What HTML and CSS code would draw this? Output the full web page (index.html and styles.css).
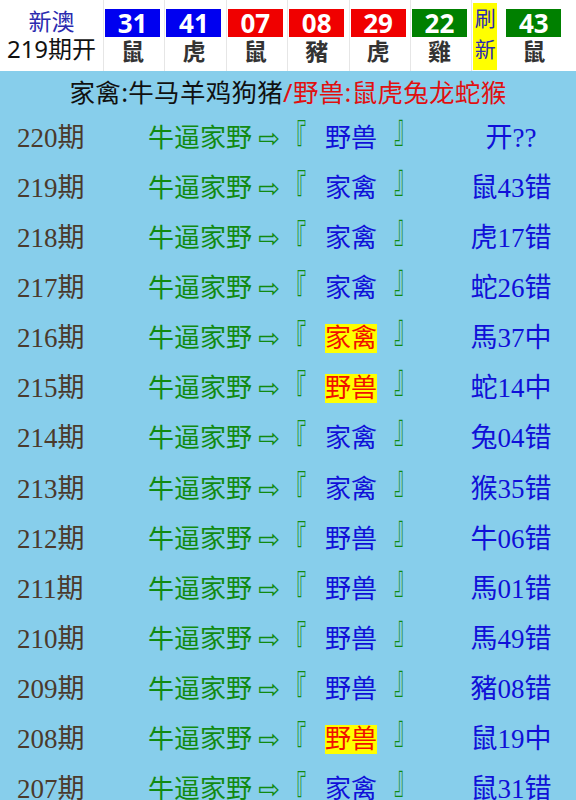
FILE: index.html
```html
<!DOCTYPE html>
<html lang="zh-CN">

<head>
	<meta charset="UTF-8">
	<meta name="viewport" content="width=device-width, initial-scale=1.0">
	<title>新澳 牛逼家野</title>
	<link rel="stylesheet" href="styles.css">
</head>

<body>
	<div class="top">
		<div class="label">
			<div class="area">新澳</div>
			<div class="issue">219期开</div>
		</div>
		<div class="ball"><div class="num blue">31</div><div class="sx">鼠</div></div>
		<div class="ball"><div class="num blue">41</div><div class="sx">虎</div></div>
		<div class="ball"><div class="num red">07</div><div class="sx">鼠</div></div>
		<div class="ball"><div class="num red">08</div><div class="sx">豬</div></div>
		<div class="ball"><div class="num red">29</div><div class="sx">虎</div></div>
		<div class="ball"><div class="num green">22</div><div class="sx">雞</div></div>
		<div class="refresh">刷<br>新</div>
		<div class="ball last"><div class="num green">43</div><div class="sx">鼠</div></div>
	</div>

	<div class="list">
		<div class="sub">家禽:牛马羊鸡狗猪<span class="wild">/野兽:鼠虎兔龙蛇猴</span></div>

		<div class="row"><span class="qi">220期</span><span class="tip">牛逼家野<i class="arr">⇨</i><i class="bk l">『</i><b>野兽</b><i class="bk r">』</i></span><span class="res">开??</span></div>
		<div class="row"><span class="qi">219期</span><span class="tip">牛逼家野<i class="arr">⇨</i><i class="bk l">『</i><b>家禽</b><i class="bk r">』</i></span><span class="res">鼠43错</span></div>
		<div class="row"><span class="qi">218期</span><span class="tip">牛逼家野<i class="arr">⇨</i><i class="bk l">『</i><b>家禽</b><i class="bk r">』</i></span><span class="res">虎17错</span></div>
		<div class="row"><span class="qi">217期</span><span class="tip">牛逼家野<i class="arr">⇨</i><i class="bk l">『</i><b>家禽</b><i class="bk r">』</i></span><span class="res">蛇26错</span></div>
		<div class="row"><span class="qi">216期</span><span class="tip">牛逼家野<i class="arr">⇨</i><i class="bk l">『</i><b class="hit">家禽</b><i class="bk r">』</i></span><span class="res">馬37中</span></div>
		<div class="row"><span class="qi">215期</span><span class="tip">牛逼家野<i class="arr">⇨</i><i class="bk l">『</i><b class="hit">野兽</b><i class="bk r">』</i></span><span class="res">蛇14中</span></div>
		<div class="row"><span class="qi">214期</span><span class="tip">牛逼家野<i class="arr">⇨</i><i class="bk l">『</i><b>家禽</b><i class="bk r">』</i></span><span class="res">兔04错</span></div>
		<div class="row"><span class="qi">213期</span><span class="tip">牛逼家野<i class="arr">⇨</i><i class="bk l">『</i><b>家禽</b><i class="bk r">』</i></span><span class="res">猴35错</span></div>
		<div class="row"><span class="qi">212期</span><span class="tip">牛逼家野<i class="arr">⇨</i><i class="bk l">『</i><b>野兽</b><i class="bk r">』</i></span><span class="res">牛06错</span></div>
		<div class="row"><span class="qi">211期</span><span class="tip">牛逼家野<i class="arr">⇨</i><i class="bk l">『</i><b>野兽</b><i class="bk r">』</i></span><span class="res">馬01错</span></div>
		<div class="row"><span class="qi">210期</span><span class="tip">牛逼家野<i class="arr">⇨</i><i class="bk l">『</i><b>野兽</b><i class="bk r">』</i></span><span class="res">馬49错</span></div>
		<div class="row"><span class="qi">209期</span><span class="tip">牛逼家野<i class="arr">⇨</i><i class="bk l">『</i><b>野兽</b><i class="bk r">』</i></span><span class="res">豬08错</span></div>
		<div class="row"><span class="qi">208期</span><span class="tip">牛逼家野<i class="arr">⇨</i><i class="bk l">『</i><b class="hit">野兽</b><i class="bk r">』</i></span><span class="res">鼠19中</span></div>
		<div class="row"><span class="qi">207期</span><span class="tip">牛逼家野<i class="arr">⇨</i><i class="bk l">『</i><b>家禽</b><i class="bk r">』</i></span><span class="res">鼠31错</span></div>
	</div>
</body>

</html>
```

FILE: styles.css
```css
body {
	margin: 0;
	background: #87ceeb;
	font-family: "Noto Sans", "Noto Sans CJK SC", sans-serif;
}

/* 开奖头部 */
.top {
	display: flex;
	height: 71px;
	background: #fff;
}
.label {
	width: 104px;
	border-right: 1px solid #e6e6e6;
	text-align: center;
	line-height: 28px;
	padding-top: 7px;
	box-sizing: border-box;
}
.area {
	color: #2b2bb0;
	font-size: 23px;
}
.issue {
	color: #111;
	font-size: 24px;
}
.ball {
	width: 61.4px;
	box-sizing: border-box;
	padding: 9px 0 0 1px;
	border-right: 1px solid #e6e6e6;
	text-align: center;
}
.ball.last {
	border-right: none;
}
.num {
	width: 55px;
	height: 28px;
	line-height: 28px;
	color: #fff;
	font-size: 26px;
	font-weight: bold;
}
.blue {
	background: #0000f0;
}
.red {
	background: #f00000;
}
.green {
	background: #008000;
}
.sx {
	width: 55px;
	margin-top: 1px;
	font-size: 23px;
	line-height: 26px;
	font-weight: bold;
	color: #333;
}
.refresh {
	width: 24px;
	margin: 3px 8px 1px 1px;
	background: #ffff00;
	color: #2b2bb0;
	font-size: 21px;
	line-height: 31px;
	text-align: center;
}

/* 记录列表 */
.list {
	padding-bottom: 10px;
}
.sub {
	height: 39px;
	line-height: 42px;
	text-align: center;
	font-size: 25.5px;
	color: #111;
	letter-spacing: 0.3px;
}
.wild {
	color: #e01010;
}
.row {
	display: flex;
	align-items: center;
	height: 50.15px;
	font-family: "Liberation Serif", "Noto Sans CJK SC", serif;
	font-size: 26px;
}
.qi {
	width: 148px;
	padding-left: 17px;
	box-sizing: border-box;
	color: #4b3a2c;
	font-size: 27px;
}
.tip {
	width: 300px;
	color: #118a11;
	white-space: nowrap;
}
.arr {
	display: inline-block;
	width: 28px;
	text-align: right;
	font-style: normal;
	font-family: "DejaVu Sans", sans-serif;
	font-size: 26px;
}
.bk {
	display: inline-block;
	width: 13px;
	font-style: normal;
	font-family: "Noto Sans CJK TC", sans-serif;
}
.bk.l {
	margin-left: 4px;
	transform: scale(0.8, 1.5);
}
.bk.r {
	transform: translateY(-11px) scale(0.8, 1.5);
}
.tip b {
	margin: 0 16px 0 28px;
	font-weight: normal;
	color: #1010d8;
}
.tip b.hit {
	background: #ffff00;
	color: #f01000;
}
.res {
	flex: 1;
	text-align: center;
	color: #1010d8;
	font-size: 27px;
	padding-right: 2px;
}
```
